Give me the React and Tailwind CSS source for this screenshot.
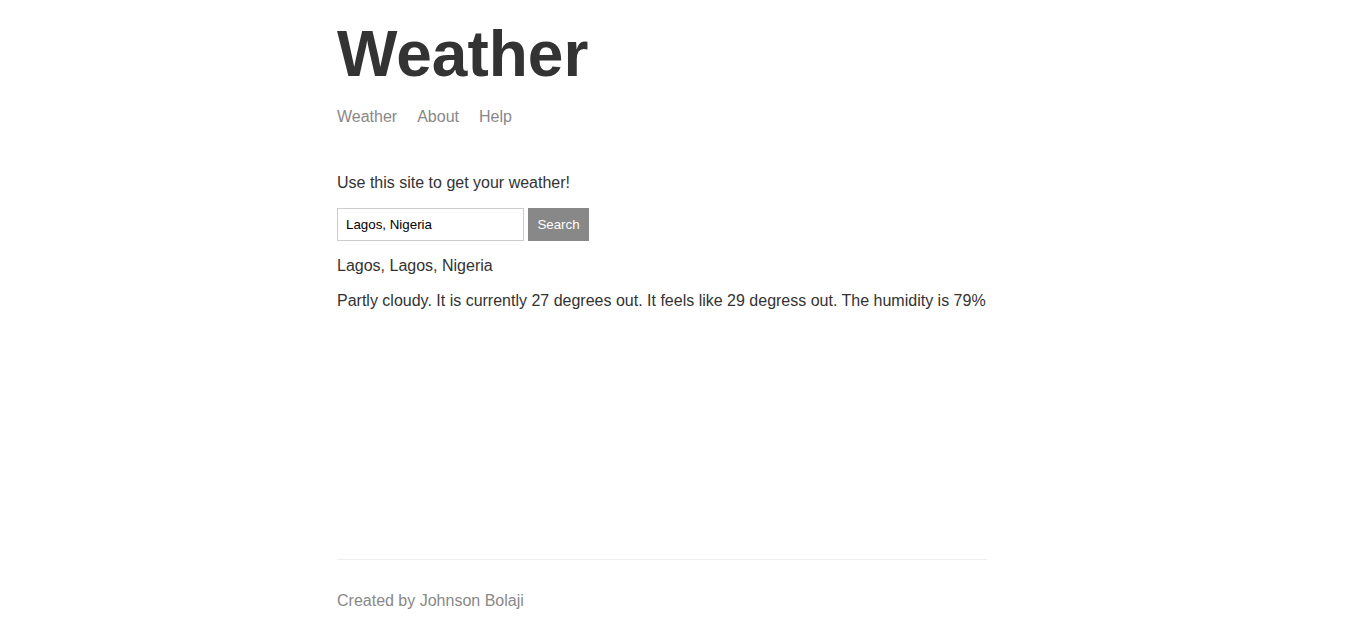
import React, { useState } from 'react';

const App = () => {
  const [location, setLocation] = useState("Lagos, Nigeria");

  const onSubmitHandler = (e) => {
    e.preventDefault();
  };

  return (
    <div className="flex justify-center pr-[21px] bg-white" style={{ fontFamily: '"Liberation Sans", Arial, sans-serif' }}>
      <div className="flex flex-col min-h-screen w-full max-w-[650px] text-[#333333] text-base leading-[1.15]">
        <header className="pt-[18px] mb-12">
          <h1 className="text-[64px] font-bold leading-[1.15] mb-4">Weather</h1>
          <nav className="flex gap-5 text-[#888888]">
            <a href="#">Weather</a>
            <a href="#">About</a>
            <a href="#">Help</a>
          </nav>
        </header>

        <main className="grow">
          <p className="mb-4">Use this site to get your weather!</p>
          <form onSubmit={onSubmitHandler} className="flex gap-1 mb-4">
            <input
              type="text"
              value={location}
              onChange={(e) => setLocation(e.target.value)}
              className="w-[187px] h-[33px] border border-[#cccccc] px-2 text-[13.333px] text-black outline-none"
            />
            <button
              type="submit"
              className="w-[61px] h-[33px] border border-[#888888] bg-[#888888] text-white text-[13.333px] font-medium cursor-pointer"
            >
              Search
            </button>
          </form>
          <p className="mb-4">Lagos, Lagos, Nigeria</p>
          <p className="mb-4">
            Partly cloudy. It is currently 27 degrees out. It feels like 29 degress out. The humidity is 79%
          </p>
        </main>

        <footer className="mt-4 border-t border-[#eeeeee] py-4 text-[#888888]">
          <p className="my-4">Created by Johnson Bolaji</p>
        </footer>
      </div>
    </div>
  );
};

export default App;
